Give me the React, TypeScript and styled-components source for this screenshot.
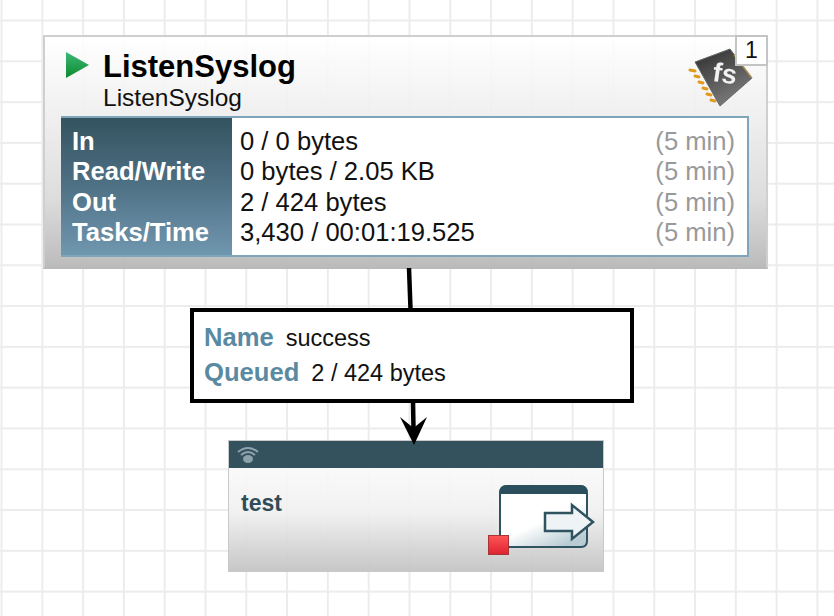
import React from "react";
import styled, { createGlobalStyle } from "styled-components";

const Global = createGlobalStyle`
  html, body { margin: 0; padding: 0; background: #fff; }
  #root { width: 834px; height: 616px; overflow: hidden; }
`;

const Canvas = styled.div`
  position: relative;
  width: 834px;
  height: 616px;
  overflow: hidden;
  font-family: "Liberation Sans", Arial, sans-serif;
  background-color: #fff;
  background-image:
    linear-gradient(to right, #ececec 2px, transparent 2px),
    linear-gradient(to bottom, #ececec 2px, transparent 2px);
  background-size: 40.8px 40.8px;
  background-position: 0.5px 19.5px;
`;

const Wires = styled.svg`
  position: absolute;
  left: 0;
  top: 0;
`;

const Processor = styled.section`
  position: absolute;
  left: 43px;
  top: 35px;
  width: 725px;
  height: 234px;
  box-sizing: border-box;
  border: 2px solid #cfcfcf;
  border-bottom-color: #b9b9b9;
  padding: 0 17px 10px 16px;
  display: flex;
  flex-direction: column;
  justify-content: flex-end;
  background: linear-gradient(to bottom, rgba(255,255,255,0.9) 0%, rgba(238,238,238,0.92) 35%, rgba(218,218,218,0.92) 70%, rgba(184,184,184,0.95) 100%);
`;

const Header = styled.header`
  display: flex;
  flex-direction: column;
  padding-left: 42px;
  margin-bottom: 6px;
  position: relative;
`;

const PlayIcon = styled.svg`
  position: absolute;
  left: 4px;
  top: 1px;
`;

const Title = styled.h1`
  margin: 0 0 2px;
  font-size: 31px;
  line-height: 34px;
  font-weight: 700;
  color: #000;
`;

const Subtitle = styled.div`
  font-size: 24.5px;
  line-height: 24px;
  color: #111;
`;

const StatsTable = styled.div`
  display: grid;
  grid-template-columns: 171px 1fr;
  height: 141px;
  box-sizing: border-box;
  border: 2px solid #7fa5bb;
  border-left: none;
  background: #fff;
`;

const Labels = styled.div`
  background: linear-gradient(to bottom, #345360 0%, #4f7185 50%, #7097b0 100%);
  display: flex;
  flex-direction: column;
  padding: 8px 0 0 11px;
`;

const LabelText = styled.div`
  height: 30.4px;
  line-height: 30.4px;
  font-size: 25.6px;
  font-weight: 700;
  color: #fff;
`;

const Values = styled.div`
  display: flex;
  flex-direction: column;
  padding: 8px 12px 0 8px;
`;

const ValueRow = styled.div`
  display: flex;
  justify-content: space-between;
  height: 30.4px;
  line-height: 30.4px;
  font-size: 25.6px;
  color: #111;
`;

const Period = styled.span`
  color: #999;
`;

const Chip = styled.svg`
  position: absolute;
  left: 688px;
  top: 48px;
  filter: blur(0.5px);
`;

const Badge = styled.div`
  position: absolute;
  left: 735px;
  top: 35px;
  width: 33px;
  height: 31px;
  box-sizing: border-box;
  border: 2px solid #c4c4c4;
  background: #fff;
  font-size: 23px;
  line-height: 26px;
  text-align: center;
  color: #111;
`;

const Label = styled.div`
  position: absolute;
  left: 190px;
  top: 308px;
  width: 444px;
  height: 95px;
  box-sizing: border-box;
  border: 4px solid #000;
  background: #fff;
  padding: 10px 0 0 10px;
  display: flex;
  flex-direction: column;
  gap: 5px;
`;

const LabelRow = styled.div`
  display: flex;
  align-items: baseline;
  height: 30px;
  line-height: 30px;
`;

const Key = styled.span`
  font-size: 25.6px;
  font-weight: 700;
  color: #5a8aa2;
  margin-right: 12px;
`;

const Val = styled.span`
  font-size: 23.5px;
  color: #111;
`;

const Port = styled.section`
  position: absolute;
  left: 228px;
  top: 440px;
  width: 376px;
  height: 132px;
  box-sizing: border-box;
  border: 1px solid #c9c9c9;
  background: linear-gradient(to bottom, rgba(255,255,255,0.9) 0%, rgba(240,240,240,0.92) 55%, rgba(196,196,196,0.95) 100%);
`;

const PortBar = styled.div`
  height: 27px;
  background: #34515e;
  display: flex;
  align-items: center;
  padding-left: 7px;
`;

const PortName = styled.div`
  padding: 22px 0 0 12px;
  font-size: 23px;
  line-height: 26px;
  font-weight: 700;
  color: #2f4c58;
`;

const PortIcon = styled.svg`
  position: absolute;
  left: 258px;
  top: 43px;
`;

const rows = [
  ["In", "0 / 0 bytes"],
  ["Read/Write", "0 bytes / 2.05 KB"],
  ["Out", "2 / 424 bytes"],
  ["Tasks/Time", "3,430 / 00:01:19.525"],
];

export default function App() {
  return (
    <Canvas>
      <Global />
      <Processor>
        <Header>
          <PlayIcon width="26" height="28" viewBox="0 0 26 28">
            <defs>
              <linearGradient id="play" x1="0" y1="0" x2="0" y2="1">
                <stop offset="0" stopColor="#3cb878" />
                <stop offset="1" stopColor="#0c8a2c" />
              </linearGradient>
            </defs>
            <path d="M1 1 L24 14 L1 27 Z" fill="url(#play)" />
          </PlayIcon>
          <Title>ListenSyslog</Title>
          <Subtitle>ListenSyslog</Subtitle>
        </Header>
        <StatsTable>
          <Labels>
            {rows.map(([k]) => (
              <LabelText key={k}>{k}</LabelText>
            ))}
          </Labels>
          <Values>
            {rows.map(([k, v]) => (
              <ValueRow key={k}>
                <span>{v}</span>
                <Period>(5 min)</Period>
              </ValueRow>
            ))}
          </Values>
        </StatsTable>
      </Processor>

      <Chip width="66" height="62" viewBox="0 0 66 62">
        <defs>
          <linearGradient id="chip" x1="0.2" y1="0" x2="0.7" y2="1">
            <stop offset="0" stopColor="#333" />
            <stop offset="1" stopColor="#808080" />
          </linearGradient>
        </defs>
        <g stroke="#e09a1e" strokeWidth="3" strokeLinecap="round">
          <path d="M2 22 L7 23 M7 28 L11 29 M11 34 L15 35 M15 40 L19 41 M19 46 L23 47 M23 52 L27 53" />
        </g>
        <path d="M7 14 L42 1 L64 30 L32 58 Z" fill="url(#chip)" stroke="#666" strokeWidth="1" strokeLinejoin="round" />
        <path d="M46 7 L64 30" stroke="#c8a050" strokeWidth="1.5" opacity="0.7" />
        <text x="25" y="35" fontFamily="Liberation Sans, sans-serif" fontSize="27" fontWeight="700" fill="#f2f2f2" transform="rotate(8 38 26)">fs</text>
      </Chip>
      <Badge>1</Badge>

      <Wires width="834" height="616">
        <path d="M409 268 L410.5 309" stroke="#000" strokeWidth="4.5" fill="none" />
        <path d="M413 401 L413.5 429" stroke="#000" strokeWidth="4.5" fill="none" />
      </Wires>

      <Label>
        <LabelRow>
          <Key>Name</Key>
          <Val>success</Val>
        </LabelRow>
        <LabelRow>
          <Key>Queued</Key>
          <Val>2 / 424 bytes</Val>
        </LabelRow>
      </Label>

      <Port>
        <PortBar>
          <svg width="24" height="19" viewBox="0 0 24 19">
            <g fill="none" stroke="#8ea2ab" strokeWidth="2">
              <path d="M2 7 Q12 -1 22 7" />
              <path d="M5 10 Q12 4 19 10" />
            </g>
            <ellipse cx="12" cy="14" rx="5" ry="4" fill="#8ea2ab" />
          </svg>
        </PortBar>
        <PortName>test</PortName>
        <PortIcon width="110" height="74" viewBox="0 0 110 74">
          <defs>
            <linearGradient id="win" x1="0.2" y1="0.2" x2="0.7" y2="1">
              <stop offset="0.5" stopColor="#fff" />
              <stop offset="1" stopColor="#b9ccd4" />
            </linearGradient>
            <linearGradient id="red" x1="0" y1="0" x2="0" y2="1">
              <stop offset="0" stopColor="#f55" />
              <stop offset="1" stopColor="#dd2233" />
            </linearGradient>
          </defs>
          <path d="M13 9 Q13 2 20 2 L93 2 Q100 2 100 9 L100 57 Q100 63 94 63 L13 63 Z" fill="url(#win)" stroke="#2f5361" strokeWidth="2" />
          <path d="M13 10 L13 8 Q13 1 20 1 L93 1 Q100 1 100 8 L100 10 Z" fill="#2b4e5c" />
          <path d="M58 29 L85 29 L85 21 L106 38 L85 55 L85 47 L58 47 Z" fill="#eef4f6" stroke="#2f5361" strokeWidth="2.5" />
          <rect x="1.5" y="51.5" width="20" height="19" fill="url(#red)" stroke="#a33" strokeWidth="1" />
        </PortIcon>
      </Port>

      <Wires width="834" height="616">
        <path d="M400 417 L413.5 428 L427 417 L414 445 Z" fill="#000" />
      </Wires>
    </Canvas>
  );
}
